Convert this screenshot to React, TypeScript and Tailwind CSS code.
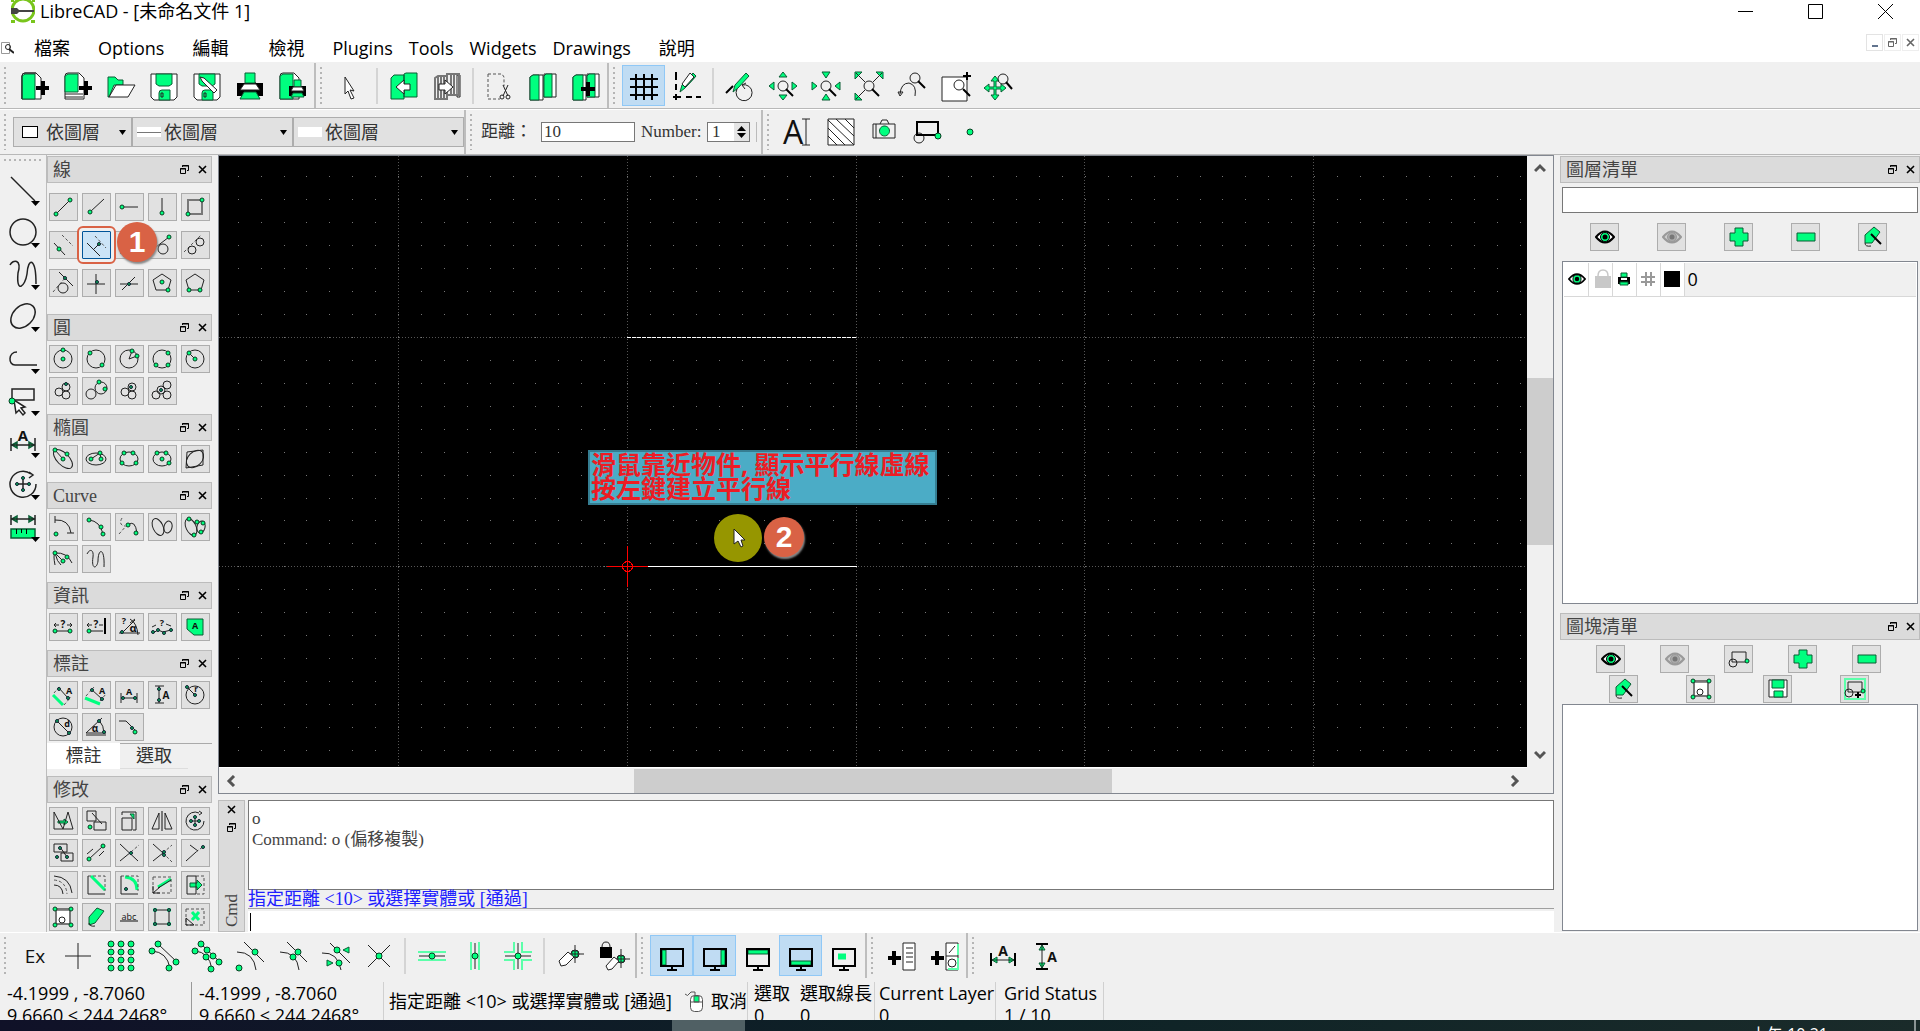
import type { ReactNode } from "react";

type Draw = {
  d?: string;
  dash?: string;
  bold?: string;
  gray?: string;
  green?: string;
  greenLine?: string;
  glow?: string;
  black?: string;
  white?: string;
  over?: string;
  overGreen?: string;
  dots?: number[][];
  tiny?: number[][];
  rings?: number[][];
  ovals?: number[][];
  text?: [string, number, number, number, number?][];
};

type Tool = { label: string; icon: Draw; active?: boolean; marked?: boolean };

const GREEN = "#00ff7f";

function Icon({ icon, w = 28, h = 28, r = 2, stroke = 1 }: { icon: Draw; w?: number; h?: number; r?: number; stroke?: number }) {
  return (
    <svg width={w} height={h} viewBox={`0 0 ${w} ${h}`} fill="none" stroke="#222" strokeWidth={stroke} className="shrink-0 overflow-visible" aria-hidden="true">
      {icon.white && <path d={icon.white} fill="#fff" />}
      {icon.gray && <path d={icon.gray} stroke="#777" strokeWidth="2" />}
      {icon.green && <path d={icon.green} fill={GREEN} stroke="#0b5c34" />}
      {icon.greenLine && <path d={icon.greenLine} stroke={GREEN} strokeWidth="3" />}
      {icon.glow && <path d={icon.glow} stroke="#5cffaa" strokeWidth="2" />}
      {icon.dash && <path d={icon.dash} stroke="#555" strokeDasharray="3 2" />}
      {icon.rings?.map((c, i) => <circle key={i} cx={c[0]} cy={c[1]} r={c[2]} />)}
      {icon.ovals?.map((o, i) => (
        <ellipse key={i} cx={o[0]} cy={o[1]} rx={o[2]} ry={o[3]} transform={`rotate(${o[4]} ${o[0]} ${o[1]})`} />
      ))}
      {icon.d && <path d={icon.d} />}
      {icon.bold && <path d={icon.bold} stroke="#000" strokeWidth="2" />}
      {icon.black && <path d={icon.black} fill="#000" stroke="none" />}
      {icon.overGreen && <path d={icon.overGreen} fill={GREEN} stroke="#0b5c34" />}
      {icon.over && <path d={icon.over} fill="#fff" />}
      {icon.dots?.map((c, i) => <circle key={i} cx={c[0]} cy={c[1]} r={r} fill={GREEN} stroke="#0a3d22" strokeWidth="1" />)}
      {icon.tiny?.map((c, i) => <circle key={i} cx={c[0]} cy={c[1]} r="1.5" fill="#0aa65a" stroke="#123" strokeWidth="1" />)}
      {icon.text?.map(([t, x, y, s, weight]) => (
        <text key={t} x={x} y={y} fontSize={s} textAnchor="middle" fill="#111" stroke="none" fontWeight={weight ?? 700} fontFamily="Open Sans, sans-serif">
          {t}
        </text>
      ))}
    </svg>
  );
}

const pentagon = "M14 5 23 11 20 21H8L5 11Z";
const ring = [[14, 14, 9]];
const blockIcon: Draw = { d: "M7 7H21V17H7Z", rings: [[8, 18, 4]], dots: [[22, 16]] };

const lineTools: Tool[] = [
  { label: "兩點線", icon: { d: "M7 21 21 7", dots: [[7, 21], [21, 7]] } },
  { label: "角度線", icon: { d: "M8 19 22 6", dots: [[8, 19]] } },
  { label: "水平線", icon: { d: "M7 14H23", dots: [[7, 14]] } },
  { label: "垂直線", icon: { d: "M14 5V21", dots: [[14, 20]] } },
  { label: "矩形", icon: { gray: "M7 7H21V21H7Z", dots: [[7, 21], [21, 7]] } },
  { label: "過點平行線", icon: { d: "M5 12 16 24", dash: "M13 4 24 15", dots: [[10, 18]] } },
  { label: "平行線", icon: { d: "M5 12 18 25M11 19 17 13", dash: "M13 5 24 17", tiny: [[17, 13]] }, marked: true },
  { label: "角平分線", icon: { d: "M5 22 24 7M5 22H22" } },
  { label: "點圓切線", icon: { d: "M8 16 21 6", rings: [[15, 18, 5]], dots: [[21, 6]] } },
  { label: "圓圓切線", icon: { dash: "M3 21 20 4", rings: [[11, 19, 4], [19, 11, 4]] } },
  { label: "正交切線", icon: { d: "M10 3 24 17", dash: "M4 23 16 9", rings: [[14, 19, 5]], tiny: [[16, 9]] } },
  { label: "正交線", icon: { d: "M5 15H23M14 5V25", tiny: [[15, 13]] } },
  { label: "相對角線", icon: { d: "M5 15H23M7 21 20 8", tiny: [[14, 15]] } },
  { label: "中心多邊形", icon: { d: pentagon, dots: [[14, 13], [20, 21]] } },
  { label: "角點多邊形", icon: { d: pentagon, dots: [[8, 21], [19, 21]] } },
];

const circleTools: Tool[] = [
  { label: "圓心、點", icon: { rings: ring, dots: [[14, 5], [14, 14]] } },
  { label: "兩點圓", icon: { rings: ring, dots: [[8, 8], [20, 20]] } },
  { label: "兩點半徑", icon: { rings: ring, d: "M17 6 14 14 22 11", dots: [[17, 6], [22, 11]] } },
  { label: "三點圓", icon: { rings: ring, dots: [[20, 8], [8, 20], [20, 20]] } },
  { label: "圓心、半徑", icon: { rings: ring, d: "M8 8 14 14", dots: [[8, 8], [14, 14]] } },
  { label: "相切兩圓一點", icon: { rings: [[10, 15, 4], [17, 10, 4], [17, 18, 4]], tiny: [[17, 7]] } },
  { label: "相切一圓兩點", icon: { rings: [[9, 17, 5], [19, 11, 6]], dots: [[17, 5], [23, 12]] } },
  { label: "相切兩圓半徑", icon: { rings: [[10, 15, 4], [17, 10, 4], [17, 18, 4]], tiny: [[16, 10]] } },
  { label: "相切三圓", icon: { rings: [[8, 18, 4], [19, 8, 4], [19, 18, 4], [13, 13, 4]], tiny: [[13, 13]] } },
];

const ellipseTools: Tool[] = [
  { label: "橢圓軸", icon: { ovals: [[14, 14, 12, 6, 45]], d: "M6 5 14 14", dots: [[6, 5], [18, 9], [14, 14]] } },
  { label: "橢圓焦點", icon: { ovals: [[14, 14, 10, 6, 0]], d: "M9 14 18 8 19 14", dots: [[18, 8], [9, 14], [19, 14]] } },
  { label: "四點橢圓", icon: { ovals: [[14, 14, 9, 7, 0]], dots: [[9, 8], [18, 8], [7, 18], [21, 18]] } },
  { label: "中心三點橢圓", icon: { ovals: [[14, 14, 9, 7, 0]], dots: [[9, 8], [18, 8], [14, 14], [21, 18]] } },
  { label: "內切橢圓", icon: { ovals: [[14, 14, 10, 7, -45]], d: "M6 7 22 5V20L5 23Z" } },
];

const curveTools: Tool[] = [
  { label: "圓心弧", icon: { d: "M6 7Q20 6 22 20M6 3V10M18 20H25", dots: [[7, 21]] } },
  { label: "三點弧", icon: { d: "M7 7Q18 8 21 21", dots: [[7, 7], [19, 14], [21, 21]] } },
  { label: "相切弧", icon: { d: "M13 12Q20 6 22 20", dash: "M7 5Q3 12 10 13M4 21 12 12", dots: [[13, 12], [21, 20]] } },
  { label: "自由曲線", icon: { ovals: [[10, 14, 5, 9, -25], [20, 14, 4, 6, 15]] } },
  { label: "點曲線", icon: { ovals: [[10, 14, 5, 9, -25], [20, 14, 4, 6, 15]], dots: [[8, 6], [16, 9], [22, 10], [20, 19], [13, 22]] } },
  { label: "橢圓弧", icon: { d: "M6 20Q4 10 6 8Q18 7 23 18M6 8 14 16M6 8Q8 17 12 20", dots: [[6, 8], [18, 12], [14, 16]] } },
  { label: "徒手線", icon: { d: "M5 9C8 3 12 5 11 12C9 25 15 24 16 16C16 3 23 2 22 22" } },
];

const infoTools: Tool[] = [
  { label: "點距離", icon: { d: "M7 18H21M5 12H10M18 12H23M7 10 5 12 7 14M21 10 23 12 21 14", dots: [[6, 18], [21, 18]], text: [["?", 14, 15, 10]] } },
  { label: "點到圖元", icon: { d: "M7 18H21M5 12H10M17 12H21M7 10 5 12 7 14", bold: "M23 5V21", dots: [[7, 18]], text: [["?", 14, 15, 10]] } },
  { label: "角度", icon: { d: "M4 20H25M6 21 20 7M15 6Q22 10 23 22M15 10 20 6", tiny: [[7, 19]], text: [["?", 9, 11, 9], ["α", 18, 19, 11]] } },
  { label: "總長度", icon: { d: "M5 20 10 17 15 19 23 17M4 14 8 12M18 11 23 13", tiny: [[5, 19], [10, 17], [16, 20], [23, 17]], text: [["?", 14, 13, 9]] } },
  { label: "面積", icon: { green: "M6 6H22V22H13L6 16Z", text: [["A", 14, 16, 9]] } },
];

const dimTools: Tool[] = [
  { label: "對齊標註", icon: { greenLine: "M4 14 14 24", dash: "M5 12 11 5M15 24 22 16", d: "M9 6 19 17", tiny: [[10, 8], [19, 17]], text: [["A", 20, 13, 9]] } },
  { label: "線性標註", icon: { greenLine: "M3 17 18 23", dash: "M4 15 12 6M18 20 24 13", d: "M9 8 20 18", tiny: [[10, 9], [20, 18]], text: [["A", 20, 13, 9]] } },
  { label: "水平標註", icon: { d: "M6 12V22M22 12V22M6 17H22", tiny: [[8, 17], [20, 17]], text: [["A", 14, 14, 9]] } },
  { label: "垂直標註", icon: { d: "M7 5H16M7 22H16M11 5V22", tiny: [[11, 8], [11, 19]], text: [["A", 18, 18, 10]] } },
  { label: "半徑標註", icon: { rings: ring, d: "M6 6 14 14", tiny: [[6, 6], [14, 14]], text: [["r", 15, 11, 8]] } },
  { label: "直徑標註", icon: { rings: ring, d: "M8 8 20 20", tiny: [[8, 8], [20, 20]], text: [["d", 18, 14, 9]] } },
  { label: "角度標註", icon: { d: "M4 22H24M4 20 20 5M4 20H24M17 7Q22 13 22 20", tiny: [[17, 8], [22, 19]], text: [["α", 13, 19, 10]] } },
  { label: "引線", icon: { d: "M4 8H11L20 17", tiny: [[17, 15]], dots: [[20, 19]] } },
];

const modifyTools: Tool[] = [
  { label: "移動", icon: { d: "M5 5V22H14ZM14 22 19 5 24 22Z", green: "M9 14H15V12L19 15 15 18V16H9Z" } },
  { label: "複製", icon: { d: "M5 4H14V14H5ZM12 15H24V23H12ZM10 6 20 17", dots: [[8, 20]] } },
  { label: "縮放", icon: { d: "M7 5H21V23M7 5V8M7 11H17V23H7ZM18 23H21", green: "M15 7H19V12Z" } },
  { label: "鏡射", icon: { d: "M11 6V22H4ZM17 6V22H24Z", gray: "M14 4V24" } },
  { label: "旋轉", icon: { d: "M18 6A9 9 0 1 0 23 14M18 4 21 6 18 8M14 9V19M9 14H19", tiny: [[14, 10], [14, 18], [10, 14], [18, 14]] } },
  { label: "移動並旋轉", icon: { d: "M5 5H18V13H5ZM12 14H24V22H12ZM11 8 18 18", tiny: [[8, 18], [11, 9], [18, 18]] } },
  { label: "旋轉兩次", icon: { d: "M7 20 21 7M5 15 11 10M17 17 22 12", dots: [[7, 20], [21, 7]] } },
  { label: "修剪", icon: { d: "M5 5 23 22M5 22 16 13", dash: "M16 13 24 6", tiny: [[16, 14]] } },
  { label: "修剪兩物件", icon: { d: "M5 5 15 14 5 22", dash: "M15 14 24 6M15 14 24 23", tiny: [[16, 13], [16, 16]] } },
  { label: "延伸", icon: { d: "M5 22 15 13M9 6 17 12", dash: "M15 13 23 7", tiny: [[22, 8]] } },
  { label: "偏移複製", icon: { d: "M5 5Q21 6 23 22M5 14Q13 14 14 23", dash: "M5 9Q17 10 18 23" } },
  { label: "斜角", icon: { dash: "M6 5H23V20", d: "M6 5V23H23", greenLine: "M9 5 23 19" } },
  { label: "圓角", icon: { dash: "M6 5H23V20", d: "M6 5V23H23", greenLine: "M10 6Q22 7 22 19", tiny: [[11, 18]] } },
  { label: "分割", icon: { dash: "M5 6H23V22H5Z", d: "M5 22 12 16M5 15V22H12M10 17 23 9", greenLine: "M10 16 23 8" } },
  { label: "拉伸", icon: { d: "M15 5H6V23H15Z", dash: "M15 5H23V23H15", green: "M9 12H16V9L21 14 16 19V16H9Z" } },
  { label: "屬性", icon: { white: "M7 7H21V21H7Z", gray: "M7 6H21V21H7Z", rings: [[13, 17, 3]], dots: [[6, 6], [22, 6], [6, 22], [22, 22]] } },
  { label: "編輯屬性", icon: { green: "M15 5 22 8 13 20 7 22V14Z", d: "M7 20Q8 24 13 23" } },
  { label: "分解文字", icon: { text: [["abc", 14, 17, 9, 400]], gray: "M5 18H23" } },
  { label: "分解", icon: { d: "M7 7H21V21H7Z", greenLine: "M5 7H9M19 7H23M5 21H9M19 21H23", tiny: [[7, 7], [21, 7], [7, 21], [21, 21]] } },
  { label: "刪除", icon: { dash: "M5 6H23V22H5Z", d: "M5 15 13 22H5Z", greenLine: "M11 9 18 17M18 9 11 17" } },
];

const magnifier = "M17 17 24 24";
const pen = "M9 13 20 1 23 4 12 16 7 20Z";
const page = "M1 27V4Q1 1 4 1H15L20 6V27Z";
const plus = "M20 9H24V14H28V18H24V23H20V18H15V14H20Z";
const monitor = "M3 7H25V24H3ZM14 24V27M9 28H19";
const floppy = "M1 2H27V25L24 28H4L1 25Z";
const floppyGreen = "M6 2H22V12L19 14H9L6 12ZM9 28V21Q9 18 12 18H20V28Z";

const fileBar: Tool[] = [
  { label: "新增", icon: { white: page, green: "M1 4 4 2H14V27H1Z", black: plus, d: "M1 27V4Q1 1 4 1H15L20 6" } },
  { label: "從範本新增", icon: { white: page, green: "M1 4 4 2H14V20H1Z", d: "M1 22H19M1 25H19", black: plus } },
  { label: "開啟", icon: { green: "M1 25V5H8L11 8H16V13H7L2 25Z", over: "M2 25 9 13H28L21 25Z" } },
  { label: "儲存", icon: { white: floppy, green: floppyGreen, d: "M11 21V25H13V21Z" } },
  { label: "另存新檔", icon: { white: floppy, green: floppyGreen, d: "M11 21V25H13V21Z", over: "M7 5 11 6 24 18 21 21 9 9Z" } },
  { label: "列印", icon: { black: "M1 11H9L11 8H18L20 11H27V24H1Z", overGreen: "M9 1H19V11H9ZM8 20H20L24 27H4Z", over: "M8 12H20L24 18H4Z" } },
  { label: "預覽列印", icon: { white: page, green: "M1 4 4 2H14V27H1Z", black: "M10 14H27V24H10Z", overGreen: "M15 8H22V15H15ZM14 21H23L25 25H12Z", over: "M14 15H23L25 19H12Z" } },
];

const editBars: Tool[][] = [
  [{ label: "選取", icon: { white: "M8 5 17 19 13 18 17 26 14 27 11 19 8 22Z" } }],
  [
    { label: "復原", icon: { green: "M14 22V2L16 1H27V25H14ZM1 27V6L4 3H14V27Z", over: "M6 15 14 8V12H20V18H14V22Z" } },
    { label: "重做", icon: { white: "M24 3H27V25H24Z", gray: "M14 3V2H26V23H14ZM2 27V6L5 4H14V27ZM5 5V26M8 5V26M11 5V26M18 3V22M21 3V22", over: "M20 15 12 8V12H6V18H12V22Z" } },
  ],
  [
    { label: "剪下", icon: { dash: "M2 2H16L18 5V14M2 2V27H14", d: "M17 13 22 24M22 13 17 24", rings: [[16, 25, 2], [22, 25, 2]] } },
    { label: "複製到剪貼簿", icon: { white: "M1 28V5L4 3H14V28ZM15 25V2H27V25Z", green: "M1 28V5L4 3H10V28ZM15 25V4L17 2H23V25Z" } },
    { label: "貼上", icon: { white: "M1 28V5L4 3H14V28ZM15 25V2H27V25Z", green: "M1 28V5L4 3H11V28ZM15 25V4L17 2H23V25Z", black: "M14 10H18V15H23V19H18V24H14V19H9V15H14Z" } },
  ],
];

const viewBars: Tool[][] = [
  [
    { label: "格線", active: true, icon: { bold: "M6 2V28M14 2V28M22 2V28M0 7H28M0 15H28M0 23H28" } },
    { label: "草稿模式", icon: { bold: "M3 0V8M3 12V18M0 25H8M13 25H19M23 25H28M3 22V28", green: pen, over: "M17 1 21 5 12 15 9 12Z", overGreen: "M20 1 23 4 13 15 11 13Z" } },
  ],
  [
    { label: "重繪", icon: { green: pen, d: "M16 13A8 8 0 1 1 11 17M20 11 16 13 19 17", bold: "M0 21 7 14" } },
    { label: "放大", icon: { rings: [[14, 14, 5]], bold: magnifier, green: "M10 5H18L14 0ZM10 23H18L14 28ZM5 10V18L0 14ZM23 10V18L28 14Z" } },
    { label: "縮小", icon: { rings: [[14, 14, 5]], bold: magnifier, green: "M10 0H18L14 6ZM10 28H18L14 22ZM0 10V18L5 14ZM28 10V18L23 14Z" } },
    { label: "自動縮放", icon: { rings: [[14, 14, 5]], bold: magnifier, d: "M1 1 10 10M27 1 18 10M1 27 10 18", green: "M0 0H7L0 7ZM28 0H21L28 7ZM0 28H7L0 21Z" } },
    { label: "前一視圖", icon: { rings: [[17, 6, 5]], bold: "M20 9 27 16", d: "M2 22Q3 11 11 11Q19 13 17 24M0 20 2 24 5 20Z" } },
    { label: "視窗縮放", icon: { white: "M1 5H26V29H1Z", rings: [[18, 13, 5]], bold: "M22 17 29 24M26 0V8M22 4H30" } },
    { label: "平移縮放", icon: { green: "M0 16 5 12V15H10V9H7L11 4 15 9H12V15H17V12L22 16 17 20V17H12V23H15L11 28 7 23H10V17H5V20Z", rings: [[19, 7, 5]], bold: "M22 10 28 17" } },
  ],
];

const entityBar: Tool[] = [
  { label: "文字", icon: { text: [["A", 9, 26, 32, 400]], d: "M18 1H26M18 27H26M22 1V27" } },
  { label: "填充", icon: { white: "M1 1H27V27H1Z", d: "M1 18 10 27M1 10 18 27M1 2 27 27M9 1 27 18M18 1 27 10" } },
  { label: "插入影像", icon: { d: "M3 6H25V20H3ZM6 6V20M10 6 12 2H17L19 6", green: "M14 8A5 5 0 1 0 15 8Z" } },
  { label: "插入圖塊", icon: { bold: "M4 4H25V17H4Z", rings: [[6, 20, 5]], dots: [[25, 18]] } },
  { label: "點", icon: { dots: [[14, 14]] } },
];

const snapBars: Tool[][] = [
  [
    { label: "獨佔捕捉", icon: { text: [["Ex", 14, 21, 19, 400]] } },
    { label: "自由捕捉", icon: { d: "M14 1V27M1 14H27" } },
    { label: "捕捉格點", icon: { dots: [4, 14, 24].flatMap((x) => [2, 10, 18, 26].map((y) => [x, y])) } },
    { label: "捕捉端點", icon: { d: "M2 9Q17 10 20 26M8 2 27 20", dots: [[2, 9], [8, 2], [26, 20], [19, 26]] } },
    { label: "捕捉圖元", icon: { d: "M2 9Q16 10 19 27M8 2 27 20", dots: [[2, 9], [8, 2], [14, 8], [20, 14], [26, 20], [13, 15], [18, 27]] } },
    { label: "捕捉中心", icon: { d: "M1 10Q18 10 20 28M8 0 28 20", dots: [[19, 10], [3, 26]] } },
    { label: "捕捉中點", icon: { d: "M1 10Q18 10 20 28M8 0 28 20", dots: [[19, 10], [14, 15]] } },
    { label: "捕捉距離", icon: { d: "M0 11Q16 10 19 28M8 1 28 21", dots: [[15, 8], [17, 21]], green: "M27 5V11L21 8ZM5 18V24L11 21Z" } },
    { label: "捕捉交點", icon: { d: "M3 3 25 25M25 3 3 25", dots: [[14, 14]] } },
  ],
  [
    { label: "限制水平", icon: { glow: "M0 10H28M0 18H28", d: "M1 14H27", dots: [[14, 14]] } },
    { label: "限制垂直", icon: { glow: "M10 0V28M18 0V28", d: "M14 1V27", dots: [[14, 14]] } },
    { label: "限制正交", icon: { glow: "M10 0V10H0M18 0V10H28M10 28V18H0M18 28V18H28", d: "M14 1V27M1 14H27", dots: [[14, 14]] } },
  ],
  [
    { label: "設定相對零點", icon: { rings: [[18, 12, 4]], green: "M15 9H21V15H15Z", d: "M18 3V21M12 12H27", over: "M2 19 11 10 17 15 9 23 4 24Z" } },
    { label: "鎖定相對零點", icon: { black: "M0 5H12V16H0Z", rings: [[21, 17, 4]], green: "M18 14H24V20H18Z", d: "M2 5Q2 0 6 0 10 0 10 5M21 7V26M14 17H30", over: "M6 24 14 15 19 19 12 27 8 28Z" } },
  ],
];

const dockBar: Tool[] = [
  { label: "左側面板", active: true, icon: { bold: monitor, green: "M4 8H8V23H4Z" } },
  { label: "右側面板", active: true, icon: { bold: monitor, green: "M20 8H24V23H20Z" } },
  { label: "上方面板", icon: { bold: monitor, green: "M4 8H24V12H4Z" } },
  { label: "下方面板", active: true, icon: { bold: monitor, green: "M4 19H24V23H4Z" } },
  { label: "浮動面板", icon: { bold: monitor, greenLine: "M8 13H16M8 16H16" } },
];

const creatorBar: Tool[] = [
  { label: "選單建立器", icon: { black: "M4 9H8V14H13V18H8V23H4V18H0V14H4Z", white: "M15 1H27V28H15Z", d: "M18 6H25M18 11H25M18 15H25M18 20H25" } },
  { label: "工具列建立器", icon: { black: "M4 9H8V14H13V18H8V23H4V18H0V14H4Z", white: "M15 1H27V28H15ZM15 14H27", d: "M18 11 24 4", rings: [[21, 21, 4]], glow: "M27 2V13M27 16V27H17" } },
];

const dimBar: Tool[] = [
  { label: "水平尺寸", icon: { bold: "M2 11V24M26 11V24", d: "M2 18H26", green: "M3 18 8 15V21ZM25 18 20 15V21Z", text: [["A", 14, 14, 14]] } },
  { label: "垂直尺寸", icon: { bold: "M4 2H16M4 27H16", d: "M10 2V27", green: "M10 3 7 8H13ZM10 26 7 21H13Z", text: [["A", 20, 20, 14]] } },
];

const sideTools: Tool[] = [
  { label: "線", icon: { d: "M2 1 26 25" } },
  { label: "圓", icon: { rings: [[14, 14, 13]] } },
  { label: "曲線", icon: { d: "M1 5C4-1 13-1 9 13C7 34 16 27 18 14C19-3 27-3 27 24" } },
  { label: "橢圓", icon: { ovals: [[14, 14, 14, 10, -45]] } },
  { label: "聚合線", icon: { d: "M8 8C-1 8-1 21 6 21H28" } },
  { label: "選取", icon: { d: "M3 3H25V14H3Z", dots: [[3, 15]], over: "M5 14 7 27 10 24 14 29 16 27 12 22 16 21Z" } },
  { label: "標註", icon: { d: "M2 10V23M26 10V23M2 17H26", green: "M3 17 8 14V20ZM25 17 20 14V20Z", text: [["A", 14, 13, 15]] } },
  { label: "修改", icon: { d: "M22 4A13 13 0 1 0 27 14M20 2 24 5 20 8M14 8V20M8 14H20", tiny: [[14, 8], [14, 20], [8, 14], [20, 14]] } },
  { label: "資訊", icon: { d: "M2 3V13M26 3V13M2 7H26", green: "M2 17H26V26H2ZM3 7 8 4V10ZM25 7 20 4V10Z", black: "M7 17H8V22H7ZM12 17H13V21H12ZM17 17H18V22H17Z" } },
];

function Handle() {
  return (
    <span className="flex w-[13px] shrink-0 self-stretch py-1 pl-1">
      <span className="w-0.5 bg-[repeating-linear-gradient(#b5b5b5_0_2px,transparent_2px_5px)]" />
    </span>
  );
}

function Bar({ groups, last }: { groups: Tool[][]; last?: boolean }) {
  return (
    <div className={last ? "flex items-center" : "flex items-center border-r-2 border-r-[#bdbdbd]"}>
      <Handle />
      {groups.map((tools, i) => (
        <div key={i} className="flex items-center">
          {i > 0 && <span className="mx-1 h-9 w-0.5 bg-[#d4d4d4]" />}
          {tools.map((t) => (
            <button
              key={t.label}
              aria-label={t.label}
              className={
                t.active
                  ? "flex h-[41px] w-[43px] items-center justify-center border border-[#90c8f6] bg-[#c0dcf3]"
                  : "flex h-[41px] w-[43px] items-center justify-center hover:bg-[#d8eaf9]"
              }
            >
              <Icon icon={t.icon} r={3} />
            </button>
          ))}
        </div>
      ))}
    </div>
  );
}

function RestoreIcon() {
  return (
    <svg width="9" height="9" viewBox="0 0 9 9" fill="none" stroke="#000" aria-hidden="true">
      <path d="M2.5 2V.5h6v5H7M2 1h7M0 4h6" />
      <path d="M.5 3.5h5v5h-5z" />
    </svg>
  );
}

function CrossIcon() {
  return (
    <svg width="9" height="9" viewBox="0 0 9 9" stroke="#000" strokeWidth="1.6" aria-hidden="true">
      <path d="M1 1l7 7M8 1L1 8" />
    </svg>
  );
}

function DockTitle({ title }: { title: string }) {
  return (
    <div className="flex h-[27px] items-center gap-[9px] border border-[#bcbcbc] bg-[#dbdbdb] pr-1 pl-[5px] text-[#444]">
      <h2 className="flex-1 text-lg leading-6">{title}</h2>
      <button aria-label="浮動">
        <RestoreIcon />
      </button>
      <button aria-label="關閉">
        <CrossIcon />
      </button>
    </div>
  );
}

function Marker({ n, className }: { n: string; className: string }) {
  return (
    <span className={`${className} z-10 flex size-10 items-center justify-center rounded-full bg-[#d96245] font-['Liberation_Sans',sans-serif] text-3xl font-bold text-white shadow-[1px_2px_2px_#888]`}>
      {n}
    </span>
  );
}

function ToolGrid({ tools, loose }: { tools: Tool[]; loose?: boolean }) {
  return (
    <div
      className={
        loose
          ? "grid grid-cols-[repeat(5,29px)] gap-x-1 gap-y-[10px] px-0.5 pt-[10px] pb-[17px]"
          : "grid grid-cols-[repeat(5,29px)] gap-1 px-0.5 pt-1"
      }
    >
      {tools.map((t) => (
        <button
          key={t.label}
          aria-label={t.label}
          className={
            t.marked
              ? "relative flex h-7 items-center justify-center rounded-[1px] border border-[#005499] bg-[#cce4f7] outline-2 outline-offset-3 outline-[#d96245]"
              : "flex h-7 items-center justify-center border border-[#adadad] bg-[#e1e1e1]"
          }
        >
          <Icon icon={t.icon} w={29} />
          {t.marked && <Marker n="1" className="absolute -top-2.5 left-[34px]" />}
        </button>
      ))}
    </div>
  );
}

function Panel({ title, tools }: { title: string; tools: Tool[] }) {
  return (
    <section className="mb-[9px]">
      <DockTitle title={title} />
      <ToolGrid tools={tools} />
    </section>
  );
}

function Combo({ label, className, children }: { label: string; className: string; children: ReactNode }) {
  return (
    <label className={`${className} relative flex h-[30px] items-center border border-[#adadad] bg-[#e1e1e1]`}>
      {children}
      <select aria-label={label} className="min-w-0 flex-1 appearance-none bg-transparent text-lg leading-6 text-[#333]">
        <option>依圖層</option>
      </select>
      <svg className="pointer-events-none absolute right-[5px]" width="7" height="5" viewBox="0 0 7 5" aria-hidden="true">
        <path d="M0 0h7L3.5 5z" />
      </svg>
    </label>
  );
}

function Eye({ off, size = 20 }: { off?: boolean; size?: number }) {
  return (
    <svg width={size} height="14" viewBox="0 0 20 14" aria-hidden="true">
      <path d="M1 7Q10-4 19 7Q10 18 1 7Z" fill={off ? "#ccc" : "#fff"} stroke={off ? "#999" : "#000"} strokeWidth="2" />
      <circle cx="10" cy="7" r="4.5" fill={off ? "#aaa" : GREEN} stroke={off ? "#999" : "#000"} />
      <circle cx="10" cy="7" r="2.5" fill={off ? "#777" : "#000"} />
    </svg>
  );
}

function SideButton({ label, children }: { label: string; children: ReactNode }) {
  return (
    <button aria-label={label} className="flex h-7 w-[29px] items-center justify-center border border-[#adadad] bg-[#e1e1e1]">
      {children}
    </button>
  );
}

const plusIcon: Draw = { green: "M10 5H18V10H23V18H18V23H10V18H5V10H10Z" };
const minusIcon: Draw = { green: "M5 10H23V18H5Z" };
const editIcon: Draw = { green: "M15 4 21 9 13 20 6 20V12Z", bold: "M12 11 22 21", d: "M6 20Q6 24 12 23" };
const saveIcon: Draw = { white: "M5 5H23V22H5Z", green: "M8 5H20V13H8ZM10 16H19V22H10Z" };
const insertIcon: Draw = { ...blockIcon, glow: "M4 4H24V24H4Z", bold: "M17 17V23M14 20H20" };

function Chevron({ d }: { d: string }) {
  return (
    <svg width="12" height="12" viewBox="0 0 12 12" fill="none" stroke="#555" strokeWidth="3" aria-hidden="true">
      <path d={d} />
    </svg>
  );
}

// Grid of the drawing area: a dot every minor step, a dotted line every tenth one
function gridDots() {
  let d = "";
  for (let i = -18; i < 60; i++) {
    for (let j = -8; j < 40; j++) {
      d += `M${Math.round(408 + i * 22.9)} ${Math.round(181 + j * 22.93)}.5h1`;
    }
  }
  return d;
}

function Canvas() {
  return (
    <div className="relative min-w-0 flex-1 overflow-hidden bg-black">
      <svg className="absolute inset-0 h-full w-full" shapeRendering="crispEdges" aria-hidden="true">
        <path d={gridDots()} stroke="#777" />
        {[179.5, 408.5, 637.5, 865.5, 1094.5].map((x) => (
          <line key={x} x1={x} x2={x} y1="0" y2="100%" stroke="#555" strokeDasharray="1 2" />
        ))}
        {[181.5, 410.5].map((y) => (
          <line key={y} x1="0" x2="100%" y1={y} y2={y} stroke="#555" strokeDasharray="1 2" />
        ))}
        <path d="M408 181.5H638" stroke="#fff" strokeDasharray="4 1" />
        <path d="M429 410.5H638" stroke="#fff" />
        <path d="M388 410.5H429M408.5 390V431" stroke="#f00" />
        <circle cx="408.5" cy="410.5" r="5" fill="none" stroke="#f00" />
      </svg>
      <p className="absolute top-[294px] left-[369px] h-[55px] w-[349px] border-2 border-[#357d91] bg-[#4bacc6] pl-px text-[25px] leading-6 font-bold whitespace-nowrap text-[#ed1c24]">
        滑鼠靠近物件, 顯示平行線虛線
        <br />
        按左鍵建立平行線
      </p>
      <span className="absolute top-[358px] left-[495px] flex size-12 items-center justify-center rounded-full bg-[#969600]">
        <svg className="ml-1" width="14" height="20" viewBox="0 0 14 20" fill="#fff" stroke="#222" aria-hidden="true">
          <path d="M1 1V16L5 13 8 19 10 18 8 12H12Z" />
        </svg>
      </span>
      <Marker n="2" className="absolute top-[361px] left-[545px]" />
    </div>
  );
}

const menus = ["檔案", "Options", "編輯", "檢視", "Plugins", "Tools", "Widgets", "Drawings", "說明"];

export default function App() {
  return (
    <div className="flex h-screen flex-col overflow-hidden bg-[#f0f0f0] font-['Open_Sans','Noto_Sans_CJK_TC',sans-serif] text-lg text-black">
      <header className="bg-white">
        <div className="flex h-[31px] items-start justify-between pr-[27px] pl-[11px]">
          <div className="flex">
            <svg width="24" height="24" viewBox="0 0 24 24" fill="none" aria-hidden="true">
              <circle cx="12" cy="10" r="11" stroke="#79c51c" strokeWidth="3" />
              <path d="M0 20h4v3H0zM20 20h4v3h-4zM0 0h3v2H0zM21 0h3v2h-3z" fill="#79c51c" />
              <path d="M0 8h6l2 2h15v2H8l-2 2H0z" fill="#444" />
            </svg>
            <h1 className="pl-[5px] leading-[22px] whitespace-pre">LibreCAD - [未命名文件 1]</h1>
          </div>
          <div className="flex gap-[55px] pt-1">
            <button aria-label="最小化">
              <svg width="15" height="15" stroke="#000" aria-hidden="true"><path d="M0 7.5h15" /></svg>
            </button>
            <button aria-label="最大化">
              <svg width="15" height="15" stroke="#000" fill="none" aria-hidden="true"><path d="M.5 .5h14v14h-14z" /></svg>
            </button>
            <button aria-label="關閉視窗">
              <svg width="15" height="15" stroke="#000" aria-hidden="true"><path d="M0 0l15 15M15 0L0 15" /></svg>
            </button>
          </div>
        </div>
        <nav className="flex h-8 items-center border-b border-[#f0f0f0] pt-0.5">
          <svg className="ml-px" width="13" height="14" viewBox="0 0 13 14" fill="none" stroke="#999" aria-hidden="true">
            <path d="M.5 1.5h8v11h-8z" />
            <circle cx="7" cy="6" r="2.5" stroke="#222" />
            <path d="M8 8l5 4" stroke="#222" strokeWidth="2" />
          </svg>
          {menus.map((m) => (
            <button key={m} className={/[a-z]/.test(m) ? "px-2" : "px-5"}>
              {m}
            </button>
          ))}
          <div className="ml-auto flex gap-px self-start pt-px pr-px">
            <button aria-label="最小化文件" className="flex size-[17px] items-end justify-center border border-[#e3e3e3] pb-[3px]">
              <span className="h-0.5 w-1.5 bg-slate-500" />
            </button>
            <button aria-label="還原文件" className="flex size-[17px] items-center justify-center border border-[#e3e3e3] opacity-60">
              <RestoreIcon />
            </button>
            <button aria-label="關閉文件" className="flex size-[17px] items-center justify-center border border-[#e3e3e3] opacity-60">
              <CrossIcon />
            </button>
          </div>
        </nav>
      </header>

      <div className="flex h-[46px] shrink-0 border-b border-[#b8b8b8]">
        <Bar groups={[fileBar]} />
        <Bar groups={editBars} />
        <Bar groups={viewBars} last />
      </div>

      <div className="flex h-[46px] shrink-0 border-t border-b border-t-white border-b-[#b8b8b8]">
        <div className="flex items-center border-r-2 border-[#bdbdbd]">
          <Handle />
          <Combo label="顏色" className="w-[119px] pl-2">
            <span className="mr-2 h-3 w-4 border border-black bg-white" />
          </Combo>
          <Combo label="線寬" className="w-[161px] pl-1">
            <span className="mr-[3px] flex h-2.5 w-6 items-center bg-white">
              <span className="h-px w-full bg-[#777]" />
            </span>
          </Combo>
          <Combo label="線型" className="w-[171px] pl-1">
            <span className="mr-[3px] h-2.5 w-6 bg-white" />
          </Combo>
        </div>
        <div className="flex items-center border-r-2 border-[#bdbdbd] font-['Liberation_Serif','Noto_Sans_CJK_TC',serif] text-[17px] leading-[18px] text-[#333]">
          <Handle />
          <label htmlFor="distance" className="w-[62px] pl-0.5">距離：</label>
          <input id="distance" defaultValue="10" className="h-5 w-[94px] border border-[#777] bg-white px-0.5" />
          <label htmlFor="count" className="w-[72px] pl-1.5">Number:</label>
          <div className="flex h-5 w-[43px] border border-[#777] bg-white">
            <input id="count" defaultValue="1" className="w-[26px] pl-1" />
            <div className="flex flex-col bg-[#e5e5e5] px-[3px] py-0.5">
              <button aria-label="增加"><svg className="block" width="9" height="7" viewBox="0 0 9 7" aria-hidden="true"><path d="M0 6h9L4.5 1z" /></svg></button>
              <button aria-label="減少"><svg className="block" width="9" height="7" viewBox="0 0 9 7" aria-hidden="true"><path d="M0 1h9L4.5 6z" /></svg></button>
            </div>
          </div>
          <span className="mr-1 ml-[6px] h-5 w-px bg-[#bbb]" />
        </div>
        <Bar groups={[entityBar]} last />
      </div>

      <main className="flex min-h-0 flex-1 border-b border-white">
        <aside className="flex w-[47px] shrink-0 flex-col border-r border-[#bcbcbc]">
          <span className="mt-1 mb-2 ml-1 h-0.5 w-[39px] bg-[repeating-linear-gradient(90deg,#b5b5b5_0_2px,transparent_2px_5px)]" />
          {sideTools.map((t) => (
            <button key={t.label} aria-label={t.label} className="relative flex h-[42px] items-center pl-[9px]">
              <Icon icon={t.icon} r={3} stroke={1.5} />
              <svg className="absolute bottom-[5px] left-[31px]" width="9" height="5" viewBox="0 0 9 5" aria-hidden="true">
                <path d="M0 0h9L4.5 5z" />
              </svg>
            </button>
          ))}
        </aside>

        <aside className="w-[165px] shrink-0 pt-px font-['Liberation_Serif','Noto_Sans_CJK_TC',serif]">
          <section>
            <DockTitle title="線" />
            <ToolGrid tools={lineTools} loose />
          </section>
          <Panel title="圓" tools={circleTools} />
          <Panel title="橢圓" tools={ellipseTools} />
          <Panel title="Curve" tools={curveTools} />
          <Panel title="資訊" tools={infoTools} />
          <section className="mb-[7px]">
            <DockTitle title="標註" />
            <ToolGrid tools={dimTools} />
            <div role="tablist" className="mt-0.5 flex h-[26px] text-lg leading-6 text-[#333]">
              <button role="tab" aria-selected="true" className="w-[73px] bg-white">標註</button>
              <button role="tab" aria-selected="false" className="w-[68px] border-t border-b border-t-[#aaa] border-b-[#ddd]">選取</button>
              <span className="flex-1 border-t border-[#aaa]" />
            </div>
          </section>
          <section>
            <DockTitle title="修改" />
            <ToolGrid tools={modifyTools} />
          </section>
        </aside>

        <div className="mx-1.5 flex min-w-0 flex-1 flex-col">
          <div className="flex min-h-0 flex-1 flex-col border border-[#828790]">
            <div className="flex min-h-0 flex-1">
              <Canvas />
              <div className="flex w-[26px] flex-col items-center">
                <button aria-label="向上捲動" className="flex h-6 items-center"><Chevron d="M1 9l5-5 5 5" /></button>
                <span className="flex-[198]" />
                <span className="w-full flex-[167] bg-[#cdcdcd]" />
                <span className="flex-[198]" />
                <button aria-label="向下捲動" className="flex h-6 items-center"><Chevron d="M1 3l5 5 5-5" /></button>
              </div>
            </div>
            <div className="mr-[26px] flex h-[26px] items-center border-t border-white">
              <button aria-label="向左捲動" className="flex w-6 justify-center"><Chevron d="M9 1L4 6l5 5" /></button>
              <span className="flex-[391]" />
              <span className="h-6 flex-[478] bg-[#cdcdcd]" />
              <span className="flex-[391]" />
              <button aria-label="向右捲動" className="flex w-6 justify-center"><Chevron d="M3 1l5 5-5 5" /></button>
            </div>
          </div>

          <section className="mt-1.5 flex h-[132px] shrink-0 gap-[3px] font-['Liberation_Serif','Noto_Sans_CJK_TC',serif] text-[17px] leading-[21px] text-[#444]">
            <div className="flex w-[27px] flex-col items-center gap-[9px] border border-[#bcbcbc] bg-[#dbdbdb] pt-1">
              <button aria-label="關閉"><CrossIcon /></button>
              <button aria-label="浮動"><RestoreIcon /></button>
              <h2 className="mt-auto mb-1 rotate-180 [writing-mode:vertical-rl]">Cmd</h2>
            </div>
            <div className="flex min-w-0 flex-1 flex-col">
              <div className="h-[90px] border border-[#777] bg-white px-[3px] pt-[7px]">
                <p>o</p>
                <p>Command: o (偏移複製)</p>
              </div>
              <label htmlFor="command" className="h-[19px] border-b border-[#a0a0a0] text-lg leading-[18px] text-[#2020ff]">
                指定距離 &lt;10&gt; 或選擇實體或 [通過]
              </label>
              <div className="mt-0.5 flex flex-1 items-center bg-white pl-0.5">
                <span className="h-[18px] w-px bg-black" />
                <input id="command" className="min-w-0 flex-1 outline-none" />
              </div>
            </div>
          </section>
        </div>

        <aside className="flex w-[360px] shrink-0 flex-col pt-px font-['Liberation_Serif','Noto_Sans_CJK_TC',serif]">
          <DockTitle title="圖層清單" />
          <input aria-label="篩選圖層" className="mx-0.5 mt-1 h-[26px] border border-[#777] bg-white px-1" />
          <div className="flex justify-between pt-2.5 pr-[33px] pb-2.5 pl-[30px]">
            <SideButton label="全部顯示"><Eye /></SideButton>
            <SideButton label="全部隱藏"><Eye off /></SideButton>
            <SideButton label="新增圖層"><Icon icon={plusIcon} /></SideButton>
            <SideButton label="移除圖層"><Icon icon={minusIcon} /></SideButton>
            <SideButton label="編輯圖層"><Icon icon={editIcon} /></SideButton>
          </div>
          <div className="mx-0.5 h-[343px] border border-[#828790] bg-white p-px">
            <table className="w-full border-collapse">
              <tbody>
                <tr className="h-[33px] border-b border-[#d8d8d8]">
                  <td className="w-6 border-r border-[#d8d8d8] pl-1"><Eye size={18} /></td>
                  <td className="w-6 border-r border-[#d8d8d8] pl-1.5">
                    <svg width="16" height="20" viewBox="0 0 16 20" aria-hidden="true">
                      <path d="M0 7h16v12H0z" fill="#c8c8c8" />
                      <path d="M3 7Q3 1 8 1T13 7" fill="none" stroke="#c8c8c8" strokeWidth="1.5" />
                    </svg>
                  </td>
                  <td className="w-6 border-r border-[#d8d8d8] pl-1">
                    <svg width="14" height="14" viewBox="0 0 14 14" aria-hidden="true">
                      <path d="M1 5h12v7H1z" />
                      <path d="M4 1h6v4H4zM3 10h8v3H3z" fill={GREEN} stroke="#0b5c34" />
                      <path d="M4 6h6v2H4z" fill="#fff" />
                    </svg>
                  </td>
                  <td className="w-6 border-r border-[#d8d8d8] pl-1">
                    <svg width="14" height="14" viewBox="0 0 14 14" stroke="#999" strokeWidth="2" aria-hidden="true">
                      <path d="M5 0v14M10 0v14M0 5h14M0 10h14" />
                    </svg>
                  </td>
                  <td className="w-6 border-r border-[#d8d8d8]"><span className="ml-[3px] block size-4 bg-black" /></td>
                  <td className="bg-[#f0f0f0] pl-[3px] font-['Open_Sans',sans-serif] text-lg leading-6">0</td>
                </tr>
              </tbody>
            </table>
          </div>
          <div className="h-[9px]" />
          <DockTitle title="圖塊清單" />
          <div className="flex justify-between pt-[5px] pr-[39px] pb-0.5 pl-9">
            <SideButton label="顯示所有圖塊"><Eye /></SideButton>
            <SideButton label="隱藏所有圖塊"><Eye off /></SideButton>
            <SideButton label="建立圖塊"><Icon icon={blockIcon} /></SideButton>
            <SideButton label="新增圖塊"><Icon icon={plusIcon} /></SideButton>
            <SideButton label="移除圖塊"><Icon icon={minusIcon} /></SideButton>
          </div>
          <div className="flex justify-between pr-[51px] pb-px pl-[49px]">
            <SideButton label="重新命名圖塊"><Icon icon={editIcon} /></SideButton>
            <SideButton label="編輯圖塊"><Icon icon={modifyTools[15].icon} /></SideButton>
            <SideButton label="儲存圖塊"><Icon icon={saveIcon} /></SideButton>
            <SideButton label="插入圖塊"><Icon icon={insertIcon} /></SideButton>
          </div>
          <div className="mx-0.5 mb-px flex-1 border border-[#828790] bg-white" />
        </aside>
      </main>

      <div className="flex h-[46px] shrink-0 pb-px">
        <Bar groups={snapBars} />
        <Bar groups={[dockBar]} />
        <Bar groups={[creatorBar]} />
        <Bar groups={[dimBar]} last />
      </div>

      <footer className="flex h-[41px] shrink-0 overflow-hidden pt-[3px] leading-[22px] whitespace-pre">
        <p className="w-48 shrink-0 border-r border-[#999] pl-[7px]">{"-4.1999 , -8.7060\n9.6660 < 244.2468°"}</p>
        <p className="w-48 shrink-0 border-r border-[#d0d0d0] pl-[7px]">{"-4.1999 , -8.7060\n9.6660 < 244.2468°"}</p>
        <div className="flex w-[364px] shrink-0 items-center border-r border-[#d0d0d0] pl-[5px]">
          <span>{"指定距離 <10> 或選擇實體或 [通過]"}</span>
          <svg className="mr-2 ml-3" width="19" height="24" viewBox="0 0 19 24" fill="none" stroke="#555" aria-hidden="true">
            <path d="M1 5Q4 8 5 5T11 3V7" />
            <rect x="6.5" y="6.5" width="12" height="16" rx="4" fill="#fff" />
            <path d="M10 7h5v6h-5z" fill={GREEN} />
            <path d="M6 13h13" />
          </svg>
          <span>取消</span>
        </div>
        <p className="w-[46px] shrink-0 pl-1.5">{"選取\n0"}</p>
        <p className="w-[81px] shrink-0 border-r border-[#d0d0d0] pl-1.5">{"選取線長\n0"}</p>
        <p className="w-[121px] shrink-0 border-r border-[#d0d0d0] pl-1">{"Current Layer\n0"}</p>
        <p className="w-[108px] shrink-0 border-r border-[#d0d0d0] pl-2">{"Grid Status\n1 / 10"}</p>
      </footer>

      <div className="flex h-[11px] shrink-0 overflow-hidden bg-linear-to-r from-[#101128] via-[#0d2226] to-[#1a2b2a]">
        <span className="ml-[35%] w-[73px] bg-[#506064]" />
        <span className="ml-auto pt-1 pr-[86px] text-base leading-5 text-white">上午 10:21</span>
        <span className="mr-1 w-0.5 bg-[#8a9494]" />
      </div>
    </div>
  );
}
